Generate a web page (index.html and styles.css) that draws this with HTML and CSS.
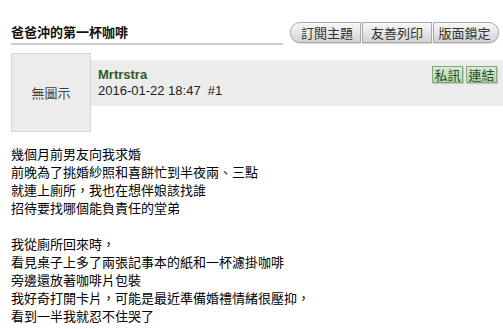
FILE: index.html
```html
<!DOCTYPE html>
<html lang="zh-Hant">
<head>
<meta charset="utf-8">
<link rel="stylesheet" href="styles.css">
</head>
<body>
<div class="topic-header">
  <h1 class="topic-title">爸爸沖的第一杯咖啡</h1>
  <div class="tools">
    <span class="tool first">訂閱主題</span>
    <span class="tool">友善列印</span>
    <span class="tool last">版面鎖定</span>
  </div>
</div>
<div class="post">
  <div class="avatar">無圖示</div>
  <div class="post-head">
    <div class="meta">
      <div class="name">Mrtrstra</div>
      <div class="date">2016-01-22 18:47&nbsp; #1</div>
    </div>
    <div class="actions">
      <span class="act">私訊</span>
      <span class="act">連結</span>
    </div>
  </div>
</div>
<div class="content">
幾個月前男友向我求婚<br>
前晚為了挑婚紗照和喜餅忙到半夜兩、三點<br>
就連上廁所，我也在想伴娘該找誰<br>
招待要找哪個能負責任的堂弟<br>
<br>
我從廁所回來時，<br>
看見桌子上多了兩張記事本的紙和一杯濾掛咖啡<br>
旁邊還放著咖啡片包裝<br>
我好奇打開卡片，可能是最近準備婚禮情緒很壓抑，<br>
看到一半我就忍不住哭了
</div>
</body>
</html>
```
FILE: styles.css
```css
* { box-sizing: border-box; }
body {
  margin: 0;
  background: #fff;
  font-family: "Noto Sans CJK TC", "Liberation Sans", sans-serif;
  font-size: 13px;
  color: #000;
}
.topic-header {
  display: flex;
  align-items: flex-end;
  margin: 22px 4px 0 11px;
}
.topic-title {
  flex: 1;
  margin: 0 7px 0 0;
  font-size: 13px;
  font-weight: bold;
  line-height: 19px;
  padding-bottom: 2px;
  border-bottom: 2px solid #cccccc;
  color: #111;
}
.tools {
  display: flex;
  gap: 1px;
  margin-bottom: 2px;
}
.tool {
  display: block;
  width: 70px;
  height: 21px;
  line-height: 19px;
  text-align: center;
  border: 1px solid #a8a8a8;
  background: linear-gradient(#f7f7f7, #e6e6e6 50%, #d2d2d2);
  color: #333;
  font-size: 13px;
  box-shadow: 0 1px 1px rgba(0,0,0,0.15);
}
.tool.first { width: 71px; border-radius: 10px 0 0 10px; padding-left: 3px; }
.tool.last { width: 66px; border-radius: 0 10px 10px 0; padding-right: 3px; }
.post {
  display: flex;
  align-items: flex-start;
  margin: 8px 0 0 11px;
}
.avatar {
  width: 80px;
  height: 79px;
  border: 1px solid #d6d6d6;
  background: #ececec;
  color: #444;
  display: flex;
  align-items: center;
  justify-content: center;
  font-size: 13px;
}
.post-head {
  flex: 1;
  height: 46px;
  margin-top: 7px;
  background: #ececec;
  display: flex;
  justify-content: space-between;
  padding: 6px 6px 0 7px;
}
.meta { font-family: "Liberation Sans", Arial, sans-serif; }
.name {
  font-weight: bold;
  color: #2f5d22;
  font-size: 13px;
  line-height: 17px;
}
.date {
  color: #222;
  font-size: 13px;
  line-height: 16px;
}
.actions { display: flex; gap: 3px; }
.act {
  display: block;
  width: 31px;
  height: 17px;
  line-height: 15px;
  text-align: center;
  border: 1px solid #86a67e;
  background: linear-gradient(#d8ecd2, #b6d8ae);
  color: #2c4a26;
  font-size: 13px;
  box-shadow: 1px 1px 1px rgba(0,0,0,0.15);
}
.content {
  margin: 13px 11px 0 11px;
  line-height: 18px;
  font-size: 13px;
  color: #000;
}
```
